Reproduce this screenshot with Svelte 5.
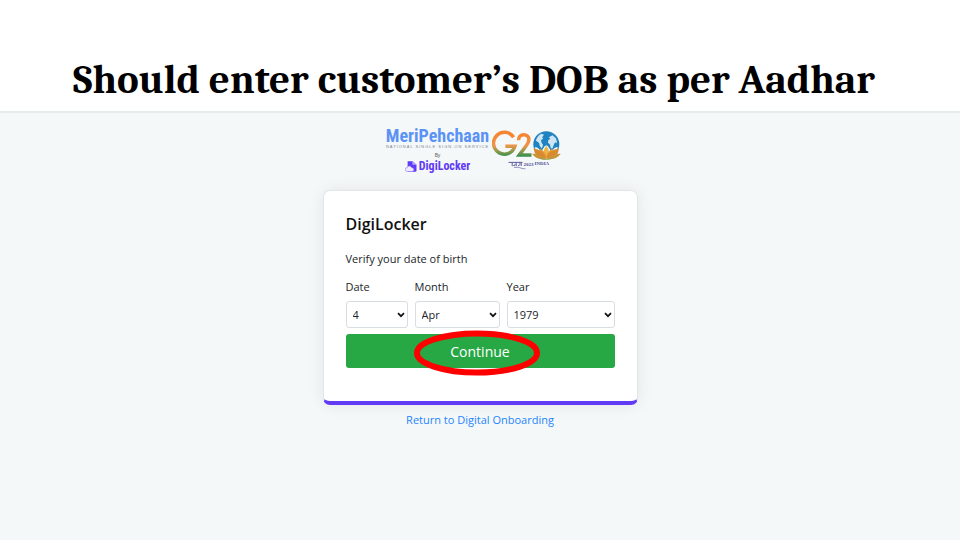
<script>
  const days = Array.from({ length: 31 }, (_, i) => i + 1);
  const months = ['Jan', 'Feb', 'Mar', 'Apr', 'May', 'Jun', 'Jul', 'Aug', 'Sep', 'Oct', 'Nov', 'Dec'];
  const years = Array.from({ length: 100 }, (_, i) => 1925 + i);
  let day = $state(4);
  let month = $state('Apr');
  let year = $state(1979);
</script>

{#snippet chevron()}
  <svg class="chevron" viewBox="0 0 8 6" aria-hidden="true"><path d="M1 1.2 4 4.2 7 1.2" fill="none" stroke="#111" stroke-width="1.7" /></svg>
{/snippet}

<div class="slide">
  <h1>Should enter customer’s DOB as per Aadhar</h1>

  <main>
    <div class="logos">
      <div class="meri">
        <span class="name">MeriPehchaan</span>
        <span class="tagline">NATIONAL SINGLE SIGN-ON SERVICE</span>
        <span class="by">By</span>
        <span class="locker">
          <svg viewBox="0 0 12 11" aria-hidden="true">
            <path d="M2.6.2h5l3.9 3.5v5.9q0 1.2-1.2 1.2H2.6Z" fill="#613af5" />
            <path d="M7.4.2v3.5h4.1Z" fill="#b7a4ff" />
            <path d="M2.4 10.5a2 2 0 0 1-.2-4 2.4 2.4 0 0 1 4.5.2 1.9 1.9 0 0 1 .5 3.8Z" fill="#eeeaff" stroke="#8f74f8" stroke-width=".6" />
          </svg>
          DigiLocker
        </span>
      </div>
      <svg class="g20" viewBox="0 0 70 40" role="img" aria-label="G20 India 2023">
        <defs>
          <linearGradient id="tri" gradientUnits="userSpaceOnUse" x1="0" y1="3" x2="0" y2="28">
            <stop offset="0.1" stop-color="#f58634" />
            <stop offset="0.5" stop-color="#ef9447" />
            <stop offset="0.68" stop-color="#a59a4c" />
            <stop offset="0.95" stop-color="#2c8f4c" />
          </linearGradient>
        </defs>
        <path d="M21.6 7.3A10.9 10.9 0 1 0 22.9 16.2H13.4" fill="none" stroke="url(#tri)" stroke-width="3.5" />
        <path d="M26.6 10.2C26.4 3 36.9 2.8 36.9 9.6C36.9 14.5 31.8 18.2 27.2 25H39.5" fill="none" stroke="url(#tri)" stroke-width="3.5" />
        <circle cx="54.3" cy="14.3" r="13" fill="#1f83c2" />
        <path d="M43.8 10.5q1.8-5 5.6-6.7l2.6 1-1.8 2.4 1 1.4-2.2 1.6.6 2.6 1.5 2.2-1.3 3.6-2-2.6-.7-3-3.3-2.5ZM56.8 7.2l3.7-2 3.4 3 1.3 4.6-2.3-.4-1.3 2.8-1 3-1.7.4-1-4-2-2.2.4-2.1 2-1.6Z" fill="#cfe5f2" />
        <path d="M42.5 17.5q3.5-1 5 2.3 2.5 1.5 3.5-1 1.6-3.2 3.3-3.6 1.7.4 3.3 3.6 1 2.5 3.5 1 1.5-3.3 5-2.3l-5 9H47.5Z" fill="#f3f8fa" />
        <path d="M54.3 15.8q5 5.8 0 12.7-5-6.9 0-12.7Z" fill="#efb348" />
        <path d="M47.8 18.6q6.3 2.7 6.5 9.9-7.9-2.7-6.5-9.9ZM60.8 18.6q-6.3 2.7-6.5 9.9 7.9-2.7 6.5-9.9Z" fill="#e39a35" />
        <path d="M41.6 18.6q9.4 1.2 12.7 9.9-11.8.2-12.7-9.9ZM67 18.6q-9.4 1.2-12.7 9.9 11.8.2 12.7-9.9Z" fill="#d98a30" />
        <path d="M40 23.8q7-.4 14.3 4.7-9.2 2.4-14.3-4.7ZM68.8 23.8q-7-.4-14.5 4.7 9.2 2.4 14.5-4.7Z" fill="#cc9437" />
        <path d="M46 27.6q8.3 3.4 16.6 0-3 2.4-8.3 2.5T46 27.6Z" fill="#86a04a" />
        <g fill="none" stroke="#4e4e99" stroke-width=".9">
          <path d="M16.5 32.4h14M20.2 32.4v3.8M21.2 35.7q2 .4 2-1.8M24.2 32.4v3.8M26 35.6q3-.3 1.5-3.2M29.2 32.4v3.6" />
          <path d="M22 37.4q5-.6 8 1 2 .8 3.4.2" stroke-width=".6" />
        </g>
        <text x="31.5" y="36.4">2023</text>
        <text x="42.5" y="35.4">INDIA</text>
      </svg>
    </div>

    <form class="card" onsubmit={(e) => e.preventDefault()}>
      <h2>DigiLocker</h2>
      <p>Verify your date of birth</p>
      <div class="fields">
        <div class="field">
          <label for="day">Date</label>
          <div class="control">
            <select id="day" bind:value={day}>{#each days as d}<option value={d}>{d}</option>{/each}</select>
            {@render chevron()}
          </div>
        </div>
        <div class="field">
          <label for="month">Month</label>
          <div class="control">
            <select id="month" bind:value={month}>{#each months as m}<option value={m}>{m}</option>{/each}</select>
            {@render chevron()}
          </div>
        </div>
        <div class="field">
          <label for="year">Year</label>
          <div class="control">
            <select id="year" bind:value={year}>{#each years as y}<option value={y}>{y}</option>{/each}</select>
            {@render chevron()}
          </div>
        </div>
      </div>
      <div class="action">
        <button type="submit">Continue</button>
        <svg class="ring" viewBox="0 0 126 46" aria-hidden="true"><ellipse cx="63" cy="23" rx="60" ry="19.5" fill="none" stroke="#f00" stroke-width="6" /></svg>
      </div>
    </form>

    <a class="return" href="#onboarding">Return to Digital Onboarding</a>
  </main>
</div>

<style>
  :global(body) { margin: 0; background: #fff; }
  * { box-sizing: border-box; }
  .slide {
    display: flex;
    flex-direction: column;
    min-height: 100vh;
    font-family: "Segoe UI", "Open Sans", "Noto Sans", sans-serif;
    font-size: 11px;
    color: #212529;
  }
  h1 {
    margin: 0;
    padding: 48px 28px 0 16px;
    font: bold 41px/63px Cambria, Caladea, "Liberation Serif", serif;
    color: #000;
    text-align: center;
  }
  main {
    flex: 1;
    display: flex;
    flex-direction: column;
    align-items: center;
    padding: 14px 0 16px;
    border-top: 2px solid #e6ebeb;
    background: #f4f8f9;
  }
  .logos { display: flex; gap: 3px; padding-right: 12px; }
  .meri { display: flex; flex-direction: column; align-items: center; }
  .name { font: bold 18px/18px "Liberation Sans Narrow", "Roboto Condensed", sans-serif; color: #5b92f5; }
  .tagline { font: 4px/4px "Liberation Sans", sans-serif; letter-spacing: 1px; color: #7d858d; white-space: nowrap; }
  .by { margin-top: 2px; font: 5px/8px "Open Sans", sans-serif; color: #555; }
  .locker {
    display: flex;
    align-items: center;
    gap: 2px;
    font: bold 12px/14px "Liberation Sans Narrow", "Roboto Condensed", sans-serif;
    color: #613af5;
  }
  .locker svg { width: 12px; height: 11px; }
  .g20 { width: 70px; height: 40px; margin-top: 3px; }
  .g20 text { font: bold 5px "Liberation Serif", serif; fill: #4b4b93; }
  .card {
    width: 315px;
    max-width: 100%;
    margin-top: 17px;
    padding: 19px 22px 33px;
    background: #fff;
    border: 1px solid #e3e6e8;
    border-bottom: 4px solid #613af5;
    border-radius: 7px;
    box-shadow: 0 0 16px rgba(0, 0, 0, 0.08);
  }
  h2 { margin: 0; font-size: 16px; line-height: 28px; font-weight: 600; color: #111; }
  p { margin: 13px 0 12px; line-height: 16px; }
  .fields { display: grid; grid-template-columns: 62fr 85fr 108fr; gap: 7px; }
  .field label { display: block; line-height: 16px; margin-bottom: 6px; }
  .control { display: grid; align-items: center; }
  .control > :global(*) { grid-area: 1 / 1; }
  select {
    appearance: none;
    width: 100%;
    height: 27px;
    padding: 0 16px 0 6px;
    border: 1px solid #d8dde2;
    border-radius: 3px;
    background: #fff;
    font: inherit;
    color: inherit;
  }
  .chevron { justify-self: end; width: 8px; height: 6px; margin-right: 3px; pointer-events: none; }
  .action { position: relative; margin-top: 6px; }
  button {
    display: block;
    width: 100%;
    height: 34px;
    padding: 1px 0 0;
    border: 0;
    border-radius: 3px;
    background: #28a745;
    color: #fff;
    font: 14px/20px "Segoe UI", "Open Sans", "Noto Sans", sans-serif;
  }
  .ring {
    position: absolute;
    top: -4px;
    left: 50%;
    width: 126px;
    height: 46px;
    margin-left: -66px;
    pointer-events: none;
  }
  .return { margin-top: 7px; line-height: 16px; color: #2484fb; text-decoration: none; }
</style>
